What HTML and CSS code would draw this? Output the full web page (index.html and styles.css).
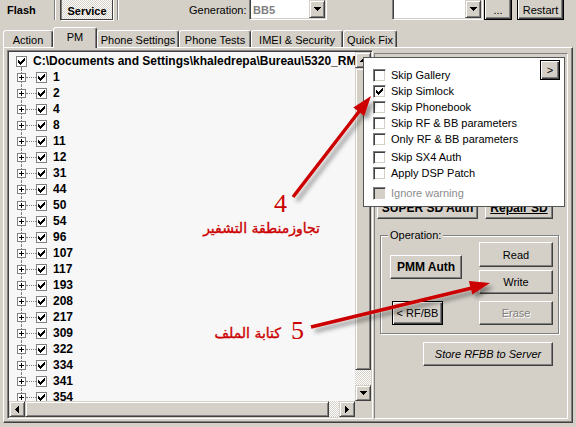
FILE: index.html
```html
<!DOCTYPE html>
<html lang="en">
<head>
<meta charset="utf-8">
<title>Service - PM</title>
<link rel="stylesheet" href="styles.css">
</head>
<body>
<svg class="defs" width="0" height="0" aria-hidden="true">
  <symbol id="chk" viewBox="0 0 7 7"><path d="M0 2h1v3H0zM1 3h1v3H1zM2 4h1v3H2zM3 3h1v3H3zM4 2h1v3H4zM5 1h1v3H5zM6 0h1v3H6z"/></symbol>
  <symbol id="plus" viewBox="0 0 7 7"><path d="M1 3h5v1H1zM3 1h1v5H3z"/></symbol>
  <symbol id="dn" viewBox="0 0 7 4"><path d="M0 0h7v1H0zM1 1h5v1H1zM2 2h3v1H2zM3 3h1v1H3z"/></symbol>
  <symbol id="up" viewBox="0 0 7 4"><path d="M3 0h1v1H3zM2 1h3v1H2zM1 2h5v1H1zM0 3h7v1H0z"/></symbol>
  <symbol id="lt" viewBox="0 0 4 7"><path d="M3 0h1v7H3zM2 1h1v5H2zM1 2h1v3H1zM0 3h1v1H0z"/></symbol>
  <symbol id="rt" viewBox="0 0 4 7"><path d="M0 0h1v7H0zM1 1h1v5H1zM2 2h1v3H2zM3 3h1v1H3z"/></symbol>
</svg>
<div class="app">
  <div class="toolbar">
    <span class="brand">Flash</span>
    <span class="sep sep1"></span>
    <span class="service">Service</span>
    <span class="sep sep2"></span>
    <span class="gen-label">Generation:</span>
    <div class="combo combo-gen"><span class="combo-text">BB5</span><span class="combo-btn raised"><svg class="g74"><use href="#dn"/></svg></span></div>
    <div class="combo combo-two"><span class="combo-text"></span><span class="combo-btn raised"><svg class="g74"><use href="#dn"/></svg></span></div>
    <span class="btn btn-def btn-dots">...</span>
    <span class="btn btn-def btn-restart">Restart</span>
  </div>

  <div class="tabs">
    <div class="tab w-action">Action</div>
    <div class="tab active w-pm">PM</div>
    <div class="tab w-ps">Phone Settings</div>
    <div class="tab w-pt">Phone Tests</div>
    <div class="tab w-imei">IMEI &amp; Security</div>
    <div class="tab w-qf">Quick Fix</div>
  </div>

  <div class="panel">
    <div class="tree">
      <div class="tree-list">
        <div class="trow root"><span class="tchk"><svg class="g7"><use href="#chk"/></svg></span><span class="tlabel">C:\Documents and Settings\khaledrepa\Bureau\5320_RM-409_PM</span></div>
        <div class="trow child"><span class="tplus"><svg class="g7"><use href="#plus"/></svg></span><span class="tdash"></span><span class="tchk"><svg class="g7"><use href="#chk"/></svg></span><span class="tlabel">1</span></div>
        <div class="trow child"><span class="tplus"><svg class="g7"><use href="#plus"/></svg></span><span class="tdash"></span><span class="tchk"><svg class="g7"><use href="#chk"/></svg></span><span class="tlabel">2</span></div>
        <div class="trow child"><span class="tplus"><svg class="g7"><use href="#plus"/></svg></span><span class="tdash"></span><span class="tchk"><svg class="g7"><use href="#chk"/></svg></span><span class="tlabel">4</span></div>
        <div class="trow child"><span class="tplus"><svg class="g7"><use href="#plus"/></svg></span><span class="tdash"></span><span class="tchk"><svg class="g7"><use href="#chk"/></svg></span><span class="tlabel">8</span></div>
        <div class="trow child"><span class="tplus"><svg class="g7"><use href="#plus"/></svg></span><span class="tdash"></span><span class="tchk"><svg class="g7"><use href="#chk"/></svg></span><span class="tlabel">11</span></div>
        <div class="trow child"><span class="tplus"><svg class="g7"><use href="#plus"/></svg></span><span class="tdash"></span><span class="tchk"><svg class="g7"><use href="#chk"/></svg></span><span class="tlabel">12</span></div>
        <div class="trow child"><span class="tplus"><svg class="g7"><use href="#plus"/></svg></span><span class="tdash"></span><span class="tchk"><svg class="g7"><use href="#chk"/></svg></span><span class="tlabel">31</span></div>
        <div class="trow child"><span class="tplus"><svg class="g7"><use href="#plus"/></svg></span><span class="tdash"></span><span class="tchk"><svg class="g7"><use href="#chk"/></svg></span><span class="tlabel">44</span></div>
        <div class="trow child"><span class="tplus"><svg class="g7"><use href="#plus"/></svg></span><span class="tdash"></span><span class="tchk"><svg class="g7"><use href="#chk"/></svg></span><span class="tlabel">50</span></div>
        <div class="trow child"><span class="tplus"><svg class="g7"><use href="#plus"/></svg></span><span class="tdash"></span><span class="tchk"><svg class="g7"><use href="#chk"/></svg></span><span class="tlabel">54</span></div>
        <div class="trow child"><span class="tplus"><svg class="g7"><use href="#plus"/></svg></span><span class="tdash"></span><span class="tchk"><svg class="g7"><use href="#chk"/></svg></span><span class="tlabel">96</span></div>
        <div class="trow child"><span class="tplus"><svg class="g7"><use href="#plus"/></svg></span><span class="tdash"></span><span class="tchk"><svg class="g7"><use href="#chk"/></svg></span><span class="tlabel">107</span></div>
        <div class="trow child"><span class="tplus"><svg class="g7"><use href="#plus"/></svg></span><span class="tdash"></span><span class="tchk"><svg class="g7"><use href="#chk"/></svg></span><span class="tlabel">117</span></div>
        <div class="trow child"><span class="tplus"><svg class="g7"><use href="#plus"/></svg></span><span class="tdash"></span><span class="tchk"><svg class="g7"><use href="#chk"/></svg></span><span class="tlabel">193</span></div>
        <div class="trow child"><span class="tplus"><svg class="g7"><use href="#plus"/></svg></span><span class="tdash"></span><span class="tchk"><svg class="g7"><use href="#chk"/></svg></span><span class="tlabel">208</span></div>
        <div class="trow child"><span class="tplus"><svg class="g7"><use href="#plus"/></svg></span><span class="tdash"></span><span class="tchk"><svg class="g7"><use href="#chk"/></svg></span><span class="tlabel">217</span></div>
        <div class="trow child"><span class="tplus"><svg class="g7"><use href="#plus"/></svg></span><span class="tdash"></span><span class="tchk"><svg class="g7"><use href="#chk"/></svg></span><span class="tlabel">309</span></div>
        <div class="trow child"><span class="tplus"><svg class="g7"><use href="#plus"/></svg></span><span class="tdash"></span><span class="tchk"><svg class="g7"><use href="#chk"/></svg></span><span class="tlabel">322</span></div>
        <div class="trow child"><span class="tplus"><svg class="g7"><use href="#plus"/></svg></span><span class="tdash"></span><span class="tchk"><svg class="g7"><use href="#chk"/></svg></span><span class="tlabel">334</span></div>
        <div class="trow child"><span class="tplus"><svg class="g7"><use href="#plus"/></svg></span><span class="tdash"></span><span class="tchk"><svg class="g7"><use href="#chk"/></svg></span><span class="tlabel">341</span></div>
        <div class="trow child"><span class="tplus"><svg class="g7"><use href="#plus"/></svg></span><span class="tdash"></span><span class="tchk"><svg class="g7"><use href="#chk"/></svg></span><span class="tlabel">354</span></div>
      </div>
      <div class="vscroll">
        <span class="sbtn raised"><svg class="g74"><use href="#up"/></svg></span>
        <span class="vthumb raised"></span>
        <span class="track"></span>
        <span class="sbtn raised"><svg class="g74"><use href="#dn"/></svg></span>
      </div>
      <div class="hscroll">
        <span class="sbtn raised"><svg class="g47"><use href="#lt"/></svg></span>
        <span class="hthumb raised"></span>
        <span class="track"></span>
        <span class="sbtn raised"><svg class="g47"><use href="#rt"/></svg></span>
      </div>
      <div class="corner"></div>
    </div>

    <div class="rpanel">
      <div class="sd-row">
        <span class="btn bold w-super">SUPER SD Auth</span>
        <span class="btn bold w-repair"><u>Repair SD</u></span>
      </div>
      <div class="group">
        <span class="legend">Operation:</span>
        <div class="gcol gleft">
          <span class="btn bold b-pmm">PMM Auth</span>
          <span class="btn btn-def b-rfbb">&lt; RF/BB</span>
        </div>
        <div class="gcol gright">
          <span class="btn b-read">Read</span>
          <span class="btn b-write">Write</span>
          <span class="btn disabled b-erase">Erase</span>
        </div>
      </div>
      <span class="btn italic b-store">Store RFBB to Server</span>
    </div>
  </div>

  <div class="popup">
    <span class="btn btn-def pop-next">&gt;</span>
    <div class="pitem"><span class="pchk"></span><span>Skip Gallery</span></div>
    <div class="pitem"><span class="pchk"><svg class="g7"><use href="#chk"/></svg></span><span>Skip Simlock</span></div>
    <div class="pitem"><span class="pchk"></span><span>Skip Phonebook</span></div>
    <div class="pitem"><span class="pchk"></span><span>Skip RF &amp; BB parameters</span></div>
    <div class="pitem"><span class="pchk"></span><span>Only RF &amp; BB parameters</span></div>
    <div class="pitem gap2"><span class="pchk"></span><span>Skip SX4 Auth</span></div>
    <div class="pitem"><span class="pchk"></span><span>Apply DSP Patch</span></div>
    <div class="pitem gap4 off"><span class="pchk"></span><span>Ignore warning</span></div>
  </div>

  <svg class="arrows" width="576" height="427" viewBox="0 0 576 427" aria-hidden="true">
    <defs>
      <filter id="sh" x="-30%" y="-30%" width="160%" height="160%">
        <feDropShadow dx="4" dy="4" stdDeviation="2" flood-color="#000" flood-opacity="0.4"/>
      </filter>
    </defs>
    <g fill="#cc0000" stroke="#cc0000" filter="url(#sh)">
      <line x1="293" y1="197" x2="361" y2="109" stroke-width="3.5"/>
      <polygon points="371,96 364.3,116.1 353.3,107.5" stroke="none"/>
      <line x1="311" y1="327" x2="472" y2="288" stroke-width="3.5"/>
      <polygon points="490,283 472.3,294.6 468.9,281" stroke="none"/>
    </g>
  </svg>
  <div class="note num n4">4</div>
  <div class="note ar a4">تجاوزمنطقة التشفير</div>
  <div class="note num n5">5</div>
  <div class="note ar a5">كتابة الملف</div>
</div>
</body>
</html>
```

FILE: styles.css
```css
* { box-sizing: border-box; margin: 0; padding: 0; }
html, body { width: 576px; height: 427px; overflow: hidden; }
body { background: #d4d0c8; font: 11px "Liberation Sans", Arial, sans-serif; color: #000; }
.defs { position: absolute; width: 0; height: 0; overflow: hidden; }
.app { position: relative; width: 576px; height: 427px; overflow: hidden; }

svg.g7 { width: 7px; height: 7px; display: block; shape-rendering: crispEdges; }
svg.g74 { width: 7px; height: 4px; display: block; shape-rendering: crispEdges; }
svg.g47 { width: 4px; height: 7px; display: block; shape-rendering: crispEdges; }

.raised {
  background: #d4d0c8;
  border: 1px solid; border-color: #d4d0c8 #404040 #404040 #d4d0c8;
  box-shadow: inset 1px 1px #fff, inset -1px -1px #808080;
  display: flex; align-items: center; justify-content: center;
}

/* toolbar */
.toolbar { display: flex; align-items: stretch; height: 22px; margin-top: -2px; }
.brand { margin-left: 7px; width: 30px; font-weight: bold; display: flex; align-items: center; padding-top: 2px; }
.sep { width: 2px; border-left: 1px solid #808080; border-right: 1px solid #fff; }
.sep1 { margin-left: 17px; }
.sep2 { margin-left: 4px; }
.service {
  margin-left: 4px; width: 53px; font-weight: bold;
  display: flex; align-items: center; justify-content: center; padding-top: 3px; padding-left: 1px;
  border: 1px solid #404040; box-shadow: inset 1px 1px #808080, 1px 1px #fff;
  background: repeating-conic-gradient(#fff 0 25%, #d4d0c8 0 50%) 0 0 / 2px 2px;
}
.gen-label { margin-left: 70px; width: 58px; display: flex; align-items: center; padding-top: 2px; }
.combo {
  display: flex; background: #fff; padding: 1px;
  border: 1px solid; border-color: #808080 #fff #fff #808080;
  box-shadow: inset 1px 1px #404040, inset -1px -1px #d4d0c8;
}
.combo-gen { margin-left: 2px; width: 78px; }
.combo-two { margin-left: 65px; width: 91px; }
.combo-text { flex: 1; color: #808080; font-weight: bold; padding-left: 2px; padding-top: 2px; display: flex; align-items: center; }
.combo-btn { width: 16px; }

.btn {
  font: inherit; background: #d4d0c8;
  border: 1px solid; border-color: #fff #404040 #404040 #fff;
  box-shadow: inset -1px -1px #808080;
  display: flex; align-items: center; justify-content: center; white-space: nowrap;
}
.btn-def {
  border: 1px solid #000;
  box-shadow: inset 1px 1px #fff, inset -1px -1px #404040, inset -2px -2px #808080;
}
.btn.bold { font-weight: bold; font-size: 12px; }
.btn.italic { font-style: italic; }
.btn.disabled { color: #808080; text-shadow: 1px 1px #fff; }
.btn-dots { margin-left: 1px; width: 28px; padding-top: 2px; }
.btn-restart { margin-left: 5px; width: 47px; padding-top: 2px; }

/* tabs */
.tabs { display: flex; align-items: flex-end; height: 20px; margin-top: 7px; padding-left: 3px; position: relative; z-index: 2; }
.tab {
  height: 17px; display: flex; align-items: center; justify-content: center; padding-top: 1px;
  border: 1px solid; border-bottom: 0; border-color: #fff #404040 transparent #fff;
  border-radius: 3px 3px 0 0; box-shadow: inset -1px 0 #808080; background: #d4d0c8;
}
.tab.active { height: 21px; margin-bottom: -1px; padding-bottom: 3px; padding-top: 0; }
.w-action { width: 50px; }
.w-pm { width: 44px; }
.w-ps { width: 82px; }
.w-pt { width: 72px; }
.w-imei { width: 92px; }
.w-qf { width: 54px; }

/* tab panel */
.panel {
  margin-left: 3px; width: 570px; height: 376px;
  border: 1px solid; border-color: #fff #404040 #404040 #fff;
  box-shadow: inset -1px -1px #808080;
  display: flex; align-items: flex-start; padding: 2px 0 0 3px;
}

/* tree */
.tree {
  width: 366px; height: 369px; padding: 1px;
  border: 1px solid; border-color: #808080 #fff #fff #808080;
  box-shadow: inset 1px 1px #404040, inset -1px -1px #d4d0c8;
  display: grid; grid-template-columns: 1fr 16px; grid-template-rows: 1fr 16px;
}
.tree-list { background: #f7f7f7; overflow: hidden; padding-top: 1px; }
.trow { position: relative; height: 16px; display: flex; align-items: center; white-space: nowrap; }
.trow.root { padding-left: 7px; }
.trow.root::after { content: ""; position: absolute; left: 12px; top: 14px; bottom: 0; border-left: 1px dotted #808080; }
.trow.child { padding-left: 8px; }
.trow.child::before { content: ""; position: absolute; left: 12px; top: 0; bottom: 0; border-left: 1px dotted #808080; }
.tchk { width: 11px; height: 11px; border: 1px solid #808080; background: #fff; display: flex; align-items: center; justify-content: center; flex: none; }
.tplus { position: relative; z-index: 1; width: 9px; height: 9px; border: 1px solid #808080; background: #fff; display: flex; align-items: center; justify-content: center; flex: none; }
.tdash { width: 10px; border-top: 1px dotted #808080; flex: none; }
.tlabel { margin-left: 6px; font-weight: bold; font-size: 12px; }

.vscroll { display: flex; flex-direction: column; }
.hscroll { display: flex; }
.sbtn { width: 16px; height: 16px; flex: none; }
.vthumb { height: 302px; flex: none; }
.hthumb { width: 304px; flex: none; }
.track { flex: 1; background: repeating-conic-gradient(#d4d0c8 0 25%, #fff 0 50%) 0 0 / 2px 2px; }
.corner { background: #d4d0c8; }

/* right panel */
.rpanel {
  margin-left: 1px; margin-top: 3px; width: 194px; height: 366px;
  border: 1px solid; border-color: #808080 #fff #fff #808080;
  display: flex; flex-direction: column; align-items: flex-start; padding-top: 142px;
}
.sd-row { display: flex; margin-left: 2px; }
.w-super { width: 101px; height: 23px; }
.w-repair { width: 68px; height: 23px; margin-left: 7px; }
.group {
  position: relative; margin-top: 16px; margin-left: 5px; width: 179px; height: 99px;
  border: 1px solid #808080; box-shadow: inset 1px 1px #fff, 1px 1px #fff;
  display: flex;
}
.legend { position: absolute; left: 7px; top: -7px; padding: 0 2px; background: #d4d0c8; line-height: 12px; }
.gcol { display: flex; flex-direction: column; align-items: flex-start; }
.gleft { padding-left: 9px; }
.gright { margin-left: auto; margin-right: 5px; }
.b-pmm { width: 72px; height: 24px; margin-top: 19px; }
.b-rfbb { width: 51px; height: 24px; margin-top: 22px; margin-left: 2px; }
.b-read { width: 74px; height: 25px; margin-top: 6px; }
.b-write { width: 74px; height: 24px; margin-top: 3px; }
.b-erase { width: 74px; height: 24px; margin-top: 7px; }
.b-store { width: 130px; height: 24px; margin-top: 8px; margin-left: 48px; }

/* popup */
.popup {
  position: absolute; left: 363px; top: 57px; width: 202px; height: 150px;
  background: #fff; border: 1px solid #555;
  padding: 9px 0 0 9px; z-index: 5;
}
.pop-next { position: absolute; left: 176px; top: 2px; width: 20px; height: 20px; }
.pitem { height: 16px; display: flex; align-items: center; }
.pitem.gap2 { margin-top: 2px; }
.pitem.gap4 { margin-top: 4px; }
.pitem span:last-child { margin-left: 5px; }
.pchk {
  width: 13px; height: 13px; flex: none; background: #fff;
  border: 1px solid; border-color: #808080 #fff #fff #808080;
  box-shadow: inset 1px 1px #404040, inset -1px -1px #d4d0c8;
  display: flex; align-items: center; justify-content: center;
}
.pitem.off { color: #8c8c8c; }
.pitem.off .pchk { background: #d4d0c8; }

/* annotations */
.arrows { position: absolute; left: 0; top: 0; z-index: 8; pointer-events: none; }
.note { position: absolute; z-index: 9; color: #cc0000; white-space: nowrap; }
.num { font: 26px "Liberation Serif", serif; line-height: 26px; }
.n4 { left: 274px; top: 191px; }
.n5 { left: 291px; top: 318px; }
.ar { direction: rtl; text-align: right; font: 14px "DejaVu Sans", sans-serif; line-height: 16px; -webkit-text-stroke: 0.35px #cc0000; }
.a4 { left: 190px; top: 220px; width: 130px; }
.a5 { left: 200px; top: 325px; width: 81px; }
```
